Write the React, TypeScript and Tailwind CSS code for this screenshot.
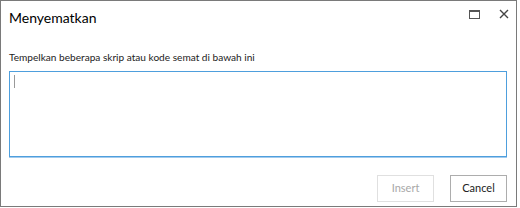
export default function App() {
  return (
    <div className="w-[520px] h-[208px] bg-white" style={{ fontFamily: 'Lato, "Liberation Sans", sans-serif' }}>
      <div className="w-[517px] h-[207px] border border-[#7a7a7a] bg-white flex flex-col">
        <div className="flex items-start justify-between h-[36px] pl-[8px] pr-[7px] pt-[7px]">
          <h1 className="text-[14px] leading-[20px] text-black">Menyematkan</h1>
          <div className="flex items-center gap-[19px] pt-[1px]">
            <svg width="11" height="9" viewBox="0 0 11 9" className="text-[#555]">
              <rect x="0.5" y="0.5" width="10" height="8" fill="none" stroke="currentColor" />
              <rect x="0.5" y="0.5" width="10" height="1.5" fill="currentColor" />
            </svg>
            <svg width="10" height="10" viewBox="0 0 10 10" className="text-[#444]">
              <path d="M1 1 L9 9 M9 1 L1 9" stroke="currentColor" strokeWidth="1.4" />
            </svg>
          </div>
        </div>
        <div className="px-[8px] pt-[13px]">
          <p className="text-[10.1px] leading-[14px] text-[#222]">Tempelkan beberapa skrip atau kode semat di bawah ini</p>
          <div className="mt-[7px] h-[86px] w-[498px] border border-[#4e9fdd] shadow-[0_1px_0_#a3cbee] relative">
            <div className="absolute left-[4px] top-[3px] w-px h-[13px] bg-[#999]" />
          </div>
        </div>
        <div className="flex justify-end gap-[16px] pr-[9px] mt-[18px]">
          <button className="w-[57px] h-[27px] border border-[#e0e0e0] text-[11px] text-[#a8a8a8] bg-white">Insert</button>
          <button className="w-[57px] h-[27px] border border-[#adadad] text-[11px] text-[#222] bg-white">Cancel</button>
        </div>
      </div>
    </div>
  );
}
